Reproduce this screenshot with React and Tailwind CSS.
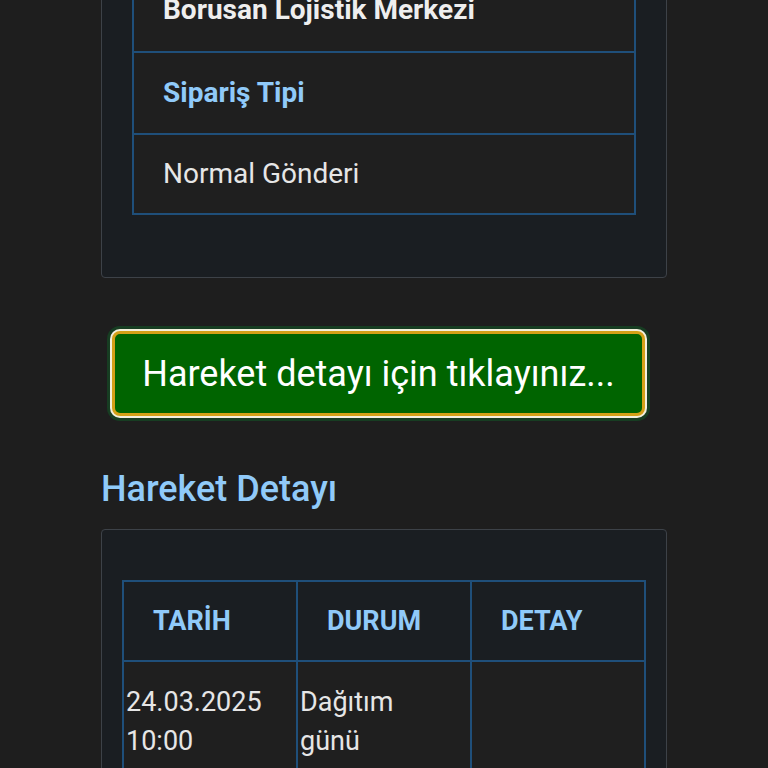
export default function App() {
  const font = { fontFamily: 'Roboto, "Noto Sans", sans-serif' }

  return (
    <div className="min-h-[768px] bg-[#1e1e1e] overflow-hidden" style={font}>
      <div className="w-[566px] mx-auto -mt-[65px]">
        {/* order info card */}
        <div className="border border-[#3d4248] rounded-[4px] bg-[#1a1e22] px-[30px] pt-[31px] pb-[62px]">
          <table className="w-full border-collapse">
            <tbody>
              <tr>
                <td className="border-2 border-[#1f4f7a] bg-[#1f1f1f] px-[29px] py-[25px] text-[28px] leading-[32px] font-bold text-[#eeeeee] whitespace-nowrap">
                  Borusan Lojistik Merkezi
                </td>
              </tr>
              <tr>
                <td className="border-2 border-[#1f4f7a] bg-[#1f1f1f] px-[29px] py-[24px] text-[28px] leading-[32px] font-bold text-[#90caf9]">
                  Sipariş Tipi
                </td>
              </tr>
              <tr>
                <td className="border-2 border-[#1f4f7a] bg-[#1f1f1f] px-[29px] py-[23px] text-[28px] leading-[32px] text-[#e6e6e6]">
                  Normal Gönderi
                </td>
              </tr>
            </tbody>
          </table>
        </div>

        <button className="mt-[53px] ml-[11px] w-[533px] h-[85px] rounded-[8px] border-[3px] border-[#d4a017] bg-[#006400] text-white text-[36px] leading-[40px] shadow-[0_0_0_2px_#f3efdc,0_0_0_5px_#173d22]">
          Hareket detayı için tıklayınız...
        </button>

        <h2 className="mt-[53px] text-[36px] leading-[40px] font-medium text-[#90caf9]">Hareket Detayı</h2>

        {/* movement table */}
        <div className="mt-[20px] border border-[#3d4248] rounded-[4px] bg-[#1a1e22] px-[20px] pt-[50px] pb-[40px]">
          <table className="w-full border-collapse table-fixed">
            <thead>
              <tr>
                {['TARİH', 'DURUM', 'DETAY'].map((h) => (
                  <th
                    key={h}
                    className="border-2 border-[#1f4f7a] px-[29px] py-[23px] text-left text-[27px] leading-[32px] font-bold text-[#90caf9]"
                  >
                    {h}
                  </th>
                ))}
              </tr>
            </thead>
            <tbody>
              <tr>
                <td className="border-2 border-[#1f4f7a] bg-[#1f1f1f] pl-[2px] pr-[14px] pt-[21px] pb-[19px] align-top text-[27px] leading-[39px] text-[#e6e6e6]">
                  24.03.2025 10:00
                </td>
                <td className="border-2 border-[#1f4f7a] bg-[#1f1f1f] pl-[2px] pr-[14px] pt-[21px] pb-[19px] align-top text-[27px] leading-[39px] text-[#e6e6e6]">
                  Dağıtım günü belirlenmiştir
                </td>
                <td className="border-2 border-[#1f4f7a] bg-[#1f1f1f] pl-[2px] pr-[14px] pt-[21px] pb-[19px] align-top text-[27px] leading-[39px] text-[#e6e6e6]"></td>
              </tr>
            </tbody>
          </table>
        </div>
      </div>
    </div>
  )
}
